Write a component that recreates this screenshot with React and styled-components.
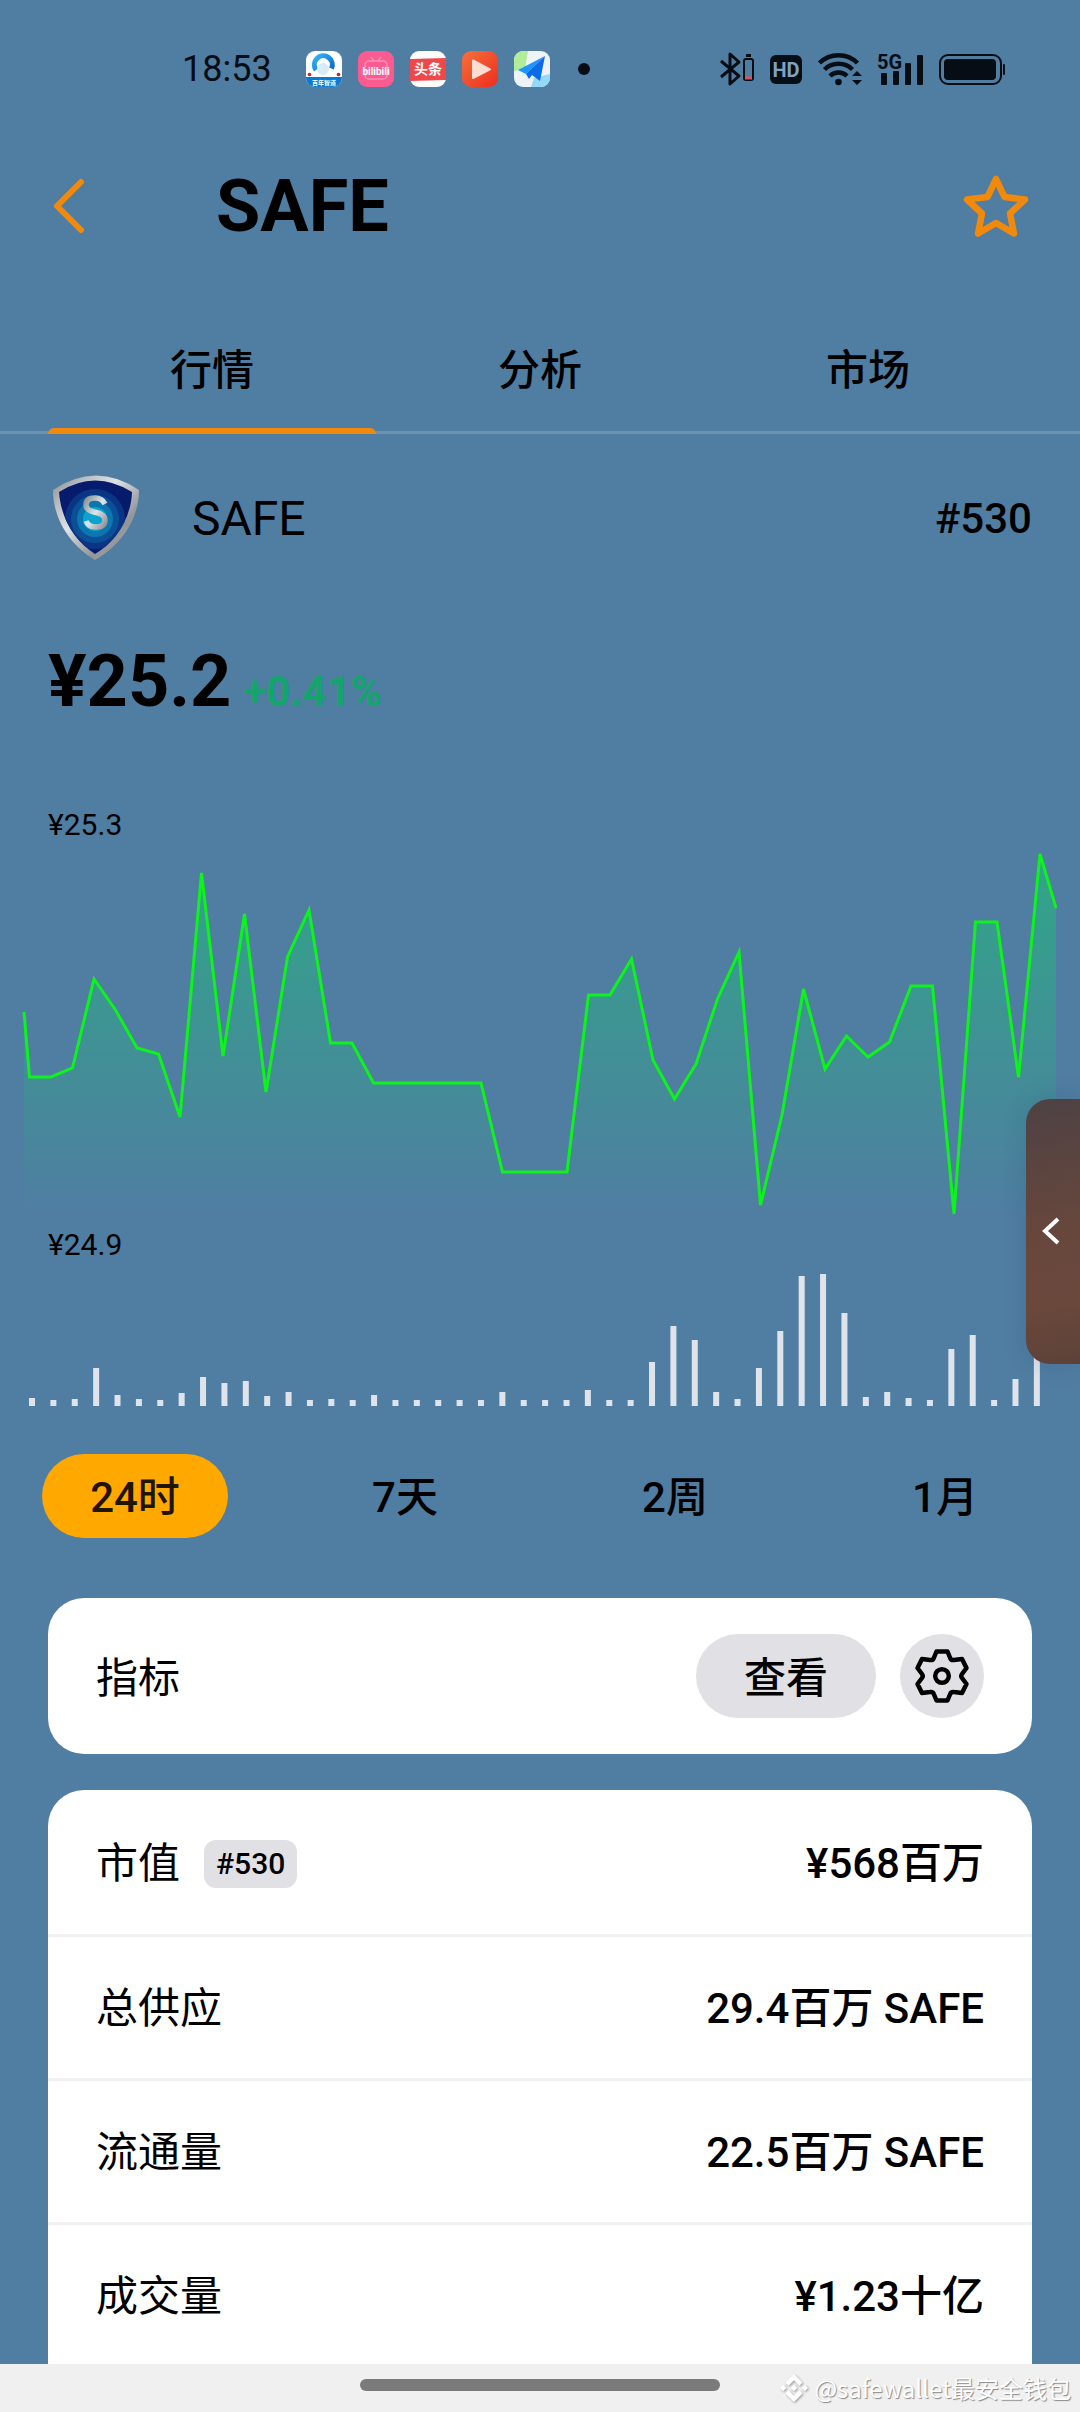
import React, { useState } from 'react';
import styled, { createGlobalStyle } from 'styled-components';
import { SiBinance } from 'react-icons/si';

const GlobalStyle = createGlobalStyle`
  * {
    box-sizing: border-box;
  }

  body {
    margin: 0;
    background: #507da2;
    color: #000;
    font-family: Roboto, 'Noto Sans CJK SC', sans-serif;
  }

  button {
    border: none;
    padding: 0;
    background: none;
    color: inherit;
    font: inherit;
    cursor: pointer;
  }
`;

const Screen = styled.div`
  height: 100vh;
  display: flex;
  flex-direction: column;
`;

const Content = styled.main`
  flex: 1;
  min-height: 0;
  overflow-y: auto;
  scrollbar-width: none;
`;

const StatusBar = styled.div`
  height: 138px;
  padding: 0 74px 0 182px;
  display: flex;
  align-items: center;
  justify-content: space-between;
  color: #060d15;
`;

const StatusGroup = styled.div`
  display: flex;
  align-items: center;
  gap: ${(props) => (props.$tight ? '12px' : '16px')};
`;

const Clock = styled.span`
  width: 108px;
  font-size: 36px;
  line-height: 42px;
`;

const Dot = styled.span`
  width: 12px;
  height: 12px;
  margin-left: 12px;
  border-radius: 50%;
  background: #060d15;
`;

const Header = styled.header`
  height: 136px;
  padding: 0 48px;
  display: flex;
  align-items: center;
`;

const IconButton = styled.button`
  display: flex;
  width: 72px;
  height: 72px;
  align-items: center;
  justify-content: ${(props) => props.$align || 'center'};
`;

const Title = styled.h1`
  flex: 1;
  margin: 0 0 0 96px;
  padding-top: 2px;
  font-size: 72px;
  line-height: 84px;
  font-weight: 700;
`;

const Tabs = styled.nav`
  height: 160px;
  padding: 0 48px;
  display: flex;
  box-shadow: inset 0 -3px #6e90b1;
`;

const Tab = styled.button`
  flex: 1;
  display: flex;
  flex-direction: column;
  justify-content: flex-end;
  font-size: 42px;
  line-height: 60px;
  font-weight: 500;

  &::after {
    content: '';
    width: 100%;
    height: 6px;
    margin-top: 27px;
    border-radius: 6px 6px 0 0;
    background: ${(props) => (props.$active ? '#f18a0c' : 'transparent')};
  }
`;

const TabLabel = styled.span`
  width: 100%;
  text-align: center;
`;

const CoinRow = styled.section`
  height: 168px;
  padding: 2px 48px 0;
  display: flex;
  align-items: center;
  gap: 48px;
`;

const CoinName = styled.span`
  flex: 1;
  font-size: 48px;
  line-height: 60px;
`;

const Rank = styled.span`
  font-size: 42px;
  line-height: 60px;
  font-weight: 500;
`;

const PriceRow = styled.section`
  padding: 38px 48px 46px;
  display: flex;
  align-items: baseline;
  gap: 12px;
`;

const Price = styled.strong`
  font-size: 72px;
  line-height: 84px;
  font-weight: 700;
`;

const Change = styled.span`
  font-size: 42px;
  line-height: 60px;
  font-weight: 700;
  color: #13a56c;
`;

const ChartSection = styled.section`
  position: relative;
  padding-top: 36px;

  svg {
    display: block;
  }
`;

const ChartLabel = styled.div`
  padding: 2px 48px 0;
  font-size: 30px;
  line-height: 34px;
`;

const ChartSvg = styled.svg`
  width: 100%;
  height: auto;
`;

const Drawer = styled.button`
  position: absolute;
  top: 329px;
  right: 0;
  width: 54px;
  height: 265px;
  display: flex;
  align-items: center;
  justify-content: center;
  padding: 0 4px 2px 0;
  border-radius: 24px 0 0 24px;
  background: linear-gradient(170deg, #4e4244 0%, #67473c 50%, #6b483c 75%, #5d4239 100%);
  box-shadow: 0 0 24px rgba(20, 50, 80, 0.16);
`;

const Periods = styled.div`
  display: grid;
  grid-template-columns: repeat(4, 1fr);
  justify-items: center;
  padding: 48px 0 60px;
`;

const Period = styled.button`
  width: 186px;
  height: 84px;
  padding-top: 4px;
  border-radius: 42px;
  font-size: 42px;
  line-height: 60px;
  font-weight: 500;
  ${(props) => props.$active && 'background: #ffa800; color: #1f1500;'}
`;

const Cards = styled.div`
  display: flex;
  flex-direction: column;
  gap: 36px;
  padding: 0 48px;
`;

const Card = styled.section`
  border-radius: 36px;
  background: #fff;
  overflow: hidden;
`;

const IndicatorRow = styled.div`
  display: flex;
  align-items: center;
  gap: 24px;
  padding: 36px 48px;
  font-size: 42px;
  line-height: 60px;
`;

const Label = styled.span`
  flex: 1;
  padding-top: 6px;
`;

const PillButton = styled.button`
  width: ${(props) => (props.$round ? '84px' : '180px')};
  height: 84px;
  display: flex;
  align-items: center;
  justify-content: center;
  padding-top: ${(props) => (props.$round ? '0' : '6px')};
  border-radius: 42px;
  background: #e1e0e5;
  font-weight: 500;
`;

const Stats = styled.dl`
  margin: 0;
  padding-bottom: 48px;
`;

const StatRow = styled.div`
  height: 144px;
  padding: 4px 48px 0;
  display: flex;
  align-items: center;
  gap: 24px;
  font-size: 42px;
  line-height: 60px;

  & + & {
    border-top: 3px solid #f1f1f1;
    padding-top: 2px;
  }
`;

const StatName = styled.dt`
  flex: 1;
  display: flex;
  align-items: center;
  gap: 24px;
`;

const StatValue = styled.dd`
  margin: 0;
  font-weight: 500;
`;

const Badge = styled.span`
  padding: 6px 12px;
  border-radius: 12px;
  background: #e1e0e5;
  font-size: 30px;
  line-height: 36px;
  font-weight: 500;
`;

const NavBar = styled.footer`
  position: relative;
  height: 48px;
  padding-top: 15px;
  background: #f0f0f0;
`;

const HomeHandle = styled.div`
  width: 360px;
  height: 12px;
  margin: 0 auto;
  border-radius: 6px;
  background: #7a7a7a;
`;

const Watermark = styled.div`
  position: absolute;
  right: 9px;
  bottom: 6px;
  display: flex;
  align-items: center;
  gap: 6px;
  color: #fff;
  font-family: 'Noto Sans CJK SC', sans-serif;
  font-size: 24px;
  line-height: 36px;
  text-shadow: 1px 1px 1px #888;

  svg {
    filter: drop-shadow(1px 1px 1px #999);
  }
`;

const PRICE_YS = [
  235, 235, 226, 137, 168, 206, 212, 275, 31, 214, 72, 250, 115, 68, 201, 201,
  241, 241, 241, 241, 241, 241, 330, 330, 330, 330, 153, 153, 117, 218, 257, 222,
  157, 110, 363, 273, 147, 227, 194, 215, 200, 144, 144, 372, 80, 80, 235, 12,
];

const VOLUMES = [
  8, 6, 7, 38, 11, 7, 6, 13, 29, 23, 25, 10, 14, 6, 7, 6, 11, 6, 6, 6, 6, 6, 14, 6,
  6, 6, 16, 6, 6, 44, 80, 66, 14, 7, 38, 75, 130, 132, 93, 9, 14, 8, 6, 57, 71, 6, 27, 50,
];

const PERIODS = ['24时', '7天', '2周', '1月'];
const TABS = ['行情', '分析', '市场'];

const STATS = [
  { name: '市值', badge: '#530', value: '¥568百万' },
  { name: '总供应', value: '29.4百万 SAFE' },
  { name: '流通量', value: '22.5百万 SAFE' },
  { name: '成交量', value: '¥1.23十亿' },
];

const PriceChart = () => {
  const points = [
    '24,170',
    ...PRICE_YS.map((y, i) => `${29.5 + i * 21.5},${y}`),
    '1056,66',
  ].join(' ');

  return (
    <ChartSvg viewBox="0 0 1080 384">
      <defs>
        <linearGradient id="area" gradientUnits="userSpaceOnUse" x1="0" y1="10" x2="0" y2="376">
          <stop offset="0" stopColor="#21b87c" stopOpacity="0.7" />
          <stop offset="1" stopColor="#21b87c" stopOpacity="0" />
        </linearGradient>
      </defs>
      <polygon points={`24,376 ${points} 1056,376`} fill="url(#area)" />
      <polyline points={points} fill="none" stroke="#0df31c" strokeWidth="3" />
    </ChartSvg>
  );
};

const VolumeChart = () => (
  <ChartSvg viewBox="0 0 1080 144">
    {VOLUMES.map((v, i) => (
      <rect key={i} x={29 + i * 21.38} y={144 - v} width="6" height={v} fill="#dee3ec" />
    ))}
  </ChartSvg>
);

const AppIcons = () => (
  <>
    <svg width="36" height="36" viewBox="0 0 36 36">
      <defs>
        <clipPath id="app">
          <rect width="36" height="36" rx="9" />
        </clipPath>
        <linearGradient id="ring" x1="0" y1="0" x2="1" y2="1">
          <stop offset="0" stopColor="#36b4f5" />
          <stop offset="1" stopColor="#0a67cf" />
        </linearGradient>
      </defs>
      <g clipPath="url(#app)">
        <rect width="36" height="36" fill="#fff" />
        <path d="M10 19A9 9 0 1 1 25.500 17.500" fill="none" stroke="url(#ring)" strokeWidth="5" />
        <circle cx="17" cy="18" r="6" fill="#d9ebf7" />
        <circle cx="3.500" cy="23.500" r="1.800" fill="#c5202e" />
        <circle cx="32.500" cy="23.500" r="1.800" fill="#c5202e" />
        <rect y="26" width="36" height="10" fill="#0b7ad3" />
        <text x="18" y="34" textAnchor="middle" fontSize="6" fontWeight="700" fill="#fff">
          百年智道
        </text>
      </g>
    </svg>
    <svg width="36" height="36" viewBox="0 0 36 36">
      <rect width="36" height="36" rx="9" fill="#fa5c92" />
      <rect x="7" y="10" width="22" height="18" rx="4" fill="none" stroke="#fb8fb4" strokeWidth="1.500" />
      <path d="M13 6l3 4M23 6l-3 4" stroke="#fb8fb4" strokeWidth="1.500" />
      <text x="18" y="24" textAnchor="middle" fontSize="10" fontWeight="700" fill="#fff">
        bilibili
      </text>
    </svg>
    <svg width="36" height="36" viewBox="0 0 36 36">
      <rect width="36" height="36" rx="9" fill="#fff" />
      <path d="M0 8l36-1v22l-36 1z" fill="#f0484a" />
      <text x="18" y="23" textAnchor="middle" fontSize="14" fontWeight="700" fill="#fff">
        头条
      </text>
    </svg>
    <svg width="36" height="36" viewBox="0 0 36 36">
      <defs>
        <linearGradient id="play" x1="0" y1="0" x2="1" y2="1">
          <stop offset="0" stopColor="#f5713a" />
          <stop offset="1" stopColor="#ee2d1e" />
        </linearGradient>
      </defs>
      <rect width="36" height="36" rx="9" fill="url(#play)" />
      <path d="M11 9.500v17.500l17-8.700z" fill="#ffdcd2" stroke="#ffdcd2" strokeWidth="2" strokeLinejoin="round" />
    </svg>
    <svg width="36" height="36" viewBox="0 0 36 36">
      <g clipPath="url(#app)">
        <rect width="36" height="36" fill="#eef3f8" />
        <path d="M0 0h14l-3 18-11 2z" fill="#b1ec98" />
        <path d="M17 36l3-9 16-4v13z" fill="#95d9f8" />
      </g>
      <path d="M31 5L4 19l8 4z" fill="#1d94ff" />
      <path d="M31 5L12 23l3 5 3-4 8 6z" fill="#0b6bea" />
    </svg>
  </>
);

const BluetoothIcon = () => (
  <svg width="38" height="36" viewBox="0 0 38 36" fill="none">
    <path d="M1 10l18 15-9 8V3l9 8L1 26" stroke="#060d15" strokeWidth="3" strokeLinejoin="round" />
    <rect x="24" y="8" width="9" height="21" rx="2" stroke="#060d15" strokeWidth="2" />
    <path d="M26 4.500h5" stroke="#060d15" strokeWidth="3" />
    <path d="M25 27h7" stroke="#e05058" strokeWidth="3" />
  </svg>
);

const HdIcon = () => (
  <svg width="36" height="36" viewBox="0 0 36 36">
    <rect y="4" width="32" height="29" rx="6" fill="#060d15" />
    <text x="16" y="26" textAnchor="middle" fontSize="20" fontWeight="700" fill="#7da2c4">
      HD
    </text>
  </svg>
);

const WifiIcon = () => (
  <svg width="46" height="36" viewBox="0 0 46 36" fill="none">
    <g stroke="#060d15" strokeWidth="4.500">
      <path d="M1.500 12a27 27 0 0 1 38 0" />
      <path d="M6.500 18.500a20 20 0 0 1 28 0" />
      <path d="M12 25a12 12 0 0 1 17 0" />
    </g>
    <circle cx="20.500" cy="31" r="3.300" fill="#060d15" />
    <path d="M34 25l5-5 5 5zM34 29l5 5 5-5z" fill="#060d15" />
  </svg>
);

const SignalIcon = () => (
  <svg width="50" height="36" viewBox="0 0 50 36" fill="#060d15">
    <text x="1" y="18" fontSize="20" fontWeight="700">
      5G
    </text>
    <rect x="5" y="22" width="6" height="12" rx="1" />
    <rect x="17" y="20" width="6" height="14" rx="1" />
    <rect x="29" y="12" width="6" height="22" rx="1" />
    <rect x="41" y="4" width="6" height="30" rx="1" />
  </svg>
);

const BatteryIcon = () => (
  <svg width="68" height="36" viewBox="0 0 68 36" fill="#060d15">
    <rect x="2" y="4" width="61" height="29" rx="8" fill="none" stroke="#060d15" strokeWidth="2" />
    <rect x="6" y="8" width="52" height="21" rx="4" />
    <rect x="65" y="13" width="2" height="11" rx="1" />
  </svg>
);

const BackIcon = () => (
  <svg width="42" height="60" viewBox="0 0 42 60">
    <path
      d="M33 6L9 30l24 24"
      fill="none"
      stroke="#f18a0c"
      strokeWidth="6"
      strokeLinecap="round"
      strokeLinejoin="round"
    />
  </svg>
);

const StarIcon = () => (
  <svg width="72" height="72" viewBox="-36 -36 72 72">
    <path
      d="M0-27L8.500-9 29-6.500 14 7.500 18 27.500 0 17-18 27.500-14 7.500-29-6.500-8.500-9z"
      fill="none"
      stroke="#f18a0c"
      strokeWidth="6.500"
      strokeLinejoin="round"
    />
  </svg>
);

const GearIcon = () => (
  <svg width="60" height="60" viewBox="-30 -30 60 60" fill="none" stroke="#000" strokeWidth="4.500">
    <path
      d="M-5.500-24.500h11L8.200-18Q9-15.500 12-16l8-1 4.500 9-4.500 6q-1.500 2 0 4l4.500 6-4.500 9-8-1q-3-.5-3.800 2l-2.700 6.500h-11L-8.200 18Q-9 15.500-12 16l-8 1-4.500-9 4.500-6q1.500-2 0-4l-4.500-6 4.500-9 8 1q3 .5 3.800-2z"
      strokeLinejoin="round"
    />
    <circle r="6.800" />
  </svg>
);

const CoinLogo = () => (
  <svg width="96" height="96" viewBox="0 0 96 96">
    <defs>
      <linearGradient id="steel" x1="0" y1="0" x2="1" y2="1">
        <stop offset="0" stopColor="#85898f" />
        <stop offset="0.2" stopColor="#b9bec3" />
        <stop offset="0.4" stopColor="#dfe3e6" />
        <stop offset="0.5" stopColor="#c2c5c9" />
        <stop offset="0.7" stopColor="#92959a" />
        <stop offset="1" stopColor="#a6a9ad" />
      </linearGradient>
      <linearGradient id="letter" x1="0" y1="0" x2="1" y2="1">
        <stop offset="0" stopColor="#8b9499" />
        <stop offset="0.5" stopColor="#dde6ea" />
        <stop offset="1" stopColor="#8f9296" />
      </linearGradient>
      <clipPath id="shield">
        <path d="M11 21Q47-2 84 21C83 49 66 72 47 83 28 71 13 49 11 21z" />
      </clipPath>
    </defs>
    <path d="M5 19Q48-10 91 19C91 51 70 76 47 89 23 75 5 49 5 19z" fill="url(#steel)" />
    <g clipPath="url(#shield)">
      <rect width="96" height="96" fill="#071b6d" />
      <circle cx="47" cy="48" r="30" fill="#0a3585" />
      <circle cx="47" cy="48" r="24" fill="#0b5096" />
      <circle cx="47" cy="48" r="18" fill="#0b76b0" />
      <circle cx="47" cy="48" r="12" fill="#0ba3cf" />
    </g>
    <path
      d="M57 33Q54 27 47 27 38 27 38 34 38 39 46 41 57 43 57 49 57 56 48 56 40 56 38 50"
      fill="none"
      stroke="url(#letter)"
      strokeWidth="5.500"
    />
  </svg>
);

const App = () => {
  const [tab, setTab] = useState(TABS[0]);
  const [period, setPeriod] = useState(PERIODS[0]);

  return (
    <Screen>
      <GlobalStyle />
      <Content>
        <StatusBar>
          <StatusGroup>
            <Clock>18:53</Clock>
            <AppIcons />
            <Dot />
          </StatusGroup>
          <StatusGroup $tight>
            <BluetoothIcon />
            <HdIcon />
            <WifiIcon />
            <SignalIcon />
            <BatteryIcon />
          </StatusGroup>
        </StatusBar>
        <Header>
          <IconButton type="button" aria-label="返回" $align="flex-start">
            <BackIcon />
          </IconButton>
          <Title>SAFE</Title>
          <IconButton type="button" aria-label="收藏">
            <StarIcon />
          </IconButton>
        </Header>
        <Tabs>
          {TABS.map((name) => (
            <Tab key={name} type="button" $active={name === tab} onClick={() => setTab(name)}>
              <TabLabel>{name}</TabLabel>
            </Tab>
          ))}
        </Tabs>
        <CoinRow>
          <CoinLogo />
          <CoinName>SAFE</CoinName>
          <Rank>#530</Rank>
        </CoinRow>
        <PriceRow>
          <Price>¥25.2</Price>
          <Change>+0.41%</Change>
        </PriceRow>
        <ChartSection>
          <ChartLabel>¥25.3</ChartLabel>
          <PriceChart />
          <ChartLabel>¥24.9</ChartLabel>
          <VolumeChart />
          <Drawer type="button" aria-label="展开">
            <svg width="24" height="36" viewBox="0 0 24 36">
              <path d="M19 6L6 18l13 12" fill="none" stroke="#fff" strokeWidth="4" />
            </svg>
          </Drawer>
        </ChartSection>
        <Periods>
          {PERIODS.map((name) => (
            <Period key={name} type="button" $active={name === period} onClick={() => setPeriod(name)}>
              {name}
            </Period>
          ))}
        </Periods>
        <Cards>
          <Card>
            <IndicatorRow>
              <Label>指标</Label>
              <PillButton type="button">查看</PillButton>
              <PillButton type="button" aria-label="设置" $round>
                <GearIcon />
              </PillButton>
            </IndicatorRow>
          </Card>
          <Card>
            <Stats>
              {STATS.map((stat) => (
                <StatRow key={stat.name}>
                  <StatName>
                    {stat.name}
                    {stat.badge && <Badge>{stat.badge}</Badge>}
                  </StatName>
                  <StatValue>{stat.value}</StatValue>
                </StatRow>
              ))}
            </Stats>
          </Card>
        </Cards>
      </Content>
      <NavBar>
        <HomeHandle />
        <Watermark>
          <SiBinance size={28} />
          @safewallet最安全钱包
        </Watermark>
      </NavBar>
    </Screen>
  );
};

export default App;
